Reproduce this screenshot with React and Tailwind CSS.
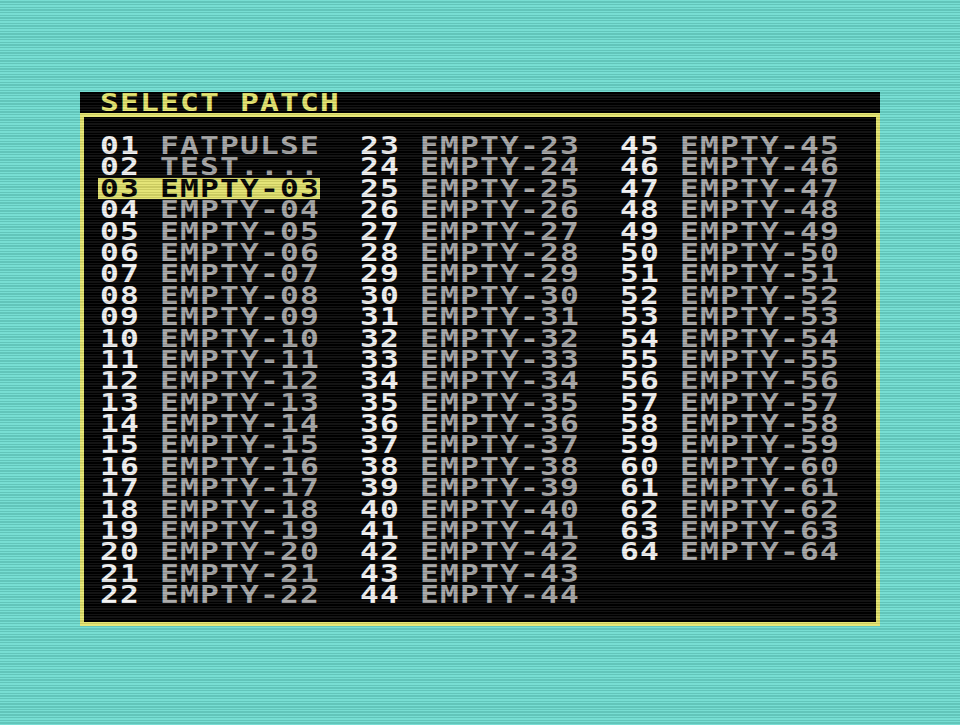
import React from 'react';

const patches = Array.from({ length: 64 }, (_, i) => {
    const num = String(i + 1).padStart(2, '0');
    let name = `EMPTY-${num}`;
    if (i === 0) name = 'FATPULSE';
    if (i === 1) name = 'TEST....';
    return { num, name };
});

const SELECTED = 3;

const C64Text = ({ children, className = '' }) => (
    <span className={`inline-block origin-left scale-x-125 tracking-[0.95px] whitespace-pre ${className}`}>
        {children}
    </span>
);

const PatchRow = ({ patch, selected }) => {
    if (selected) {
        return (
            <div className="h-[21.4px] leading-[21.4px]">
                <div className="w-[222px] -ml-[2px] pl-[2px] h-[21.4px] bg-[#e2e26c]">
                    <C64Text className="text-black">{`${patch.num} ${patch.name}`}</C64Text>
                </div>
            </div>
        );
    }
    return (
        <div className="h-[21.4px] leading-[21.4px]">
            <C64Text>
                <span className="text-[#f4f4f4]">{patch.num}</span>
                <span className="text-[#a6a6a6]">{` ${patch.name}`}</span>
            </C64Text>
        </div>
    );
};

const App = () => {
    return (
        <div className="relative w-full h-[725px] overflow-hidden bg-[#6ddbcf] font-['DejaVu_Sans_Mono',monospace] font-bold text-[25px]">
            <div className="pt-[92px] pl-[80px]">
                <div className="w-[800px]">
                    {/* title row */}
                    <div className="h-[21px] leading-[21px] bg-black pl-[20px]">
                        <C64Text className="text-[#e6e66e]">SELECT PATCH</C64Text>
                    </div>

                    {/* framed list */}
                    <div className="h-[513px] bg-black border-4 border-[#e4e46c] pt-[18px] pl-[16px]">
                        <div className="grid grid-flow-col grid-rows-[repeat(22,21.4px)] grid-cols-[260px_260px_260px]">
                            {patches.map((p, i) => (
                                <PatchRow key={p.num} patch={p} selected={i + 1 === SELECTED} />
                            ))}
                        </div>
                    </div>
                </div>
            </div>

            {/* crt scanlines */}
            <div className="pointer-events-none absolute inset-0 bg-[repeating-linear-gradient(to_bottom,rgba(255,255,255,0.08)_0px,rgba(255,255,255,0.08)_1.3px,rgba(0,0,0,0.1)_1.3px,rgba(0,0,0,0.1)_2.68px)]" />
        </div>
    );
};

export default App;
